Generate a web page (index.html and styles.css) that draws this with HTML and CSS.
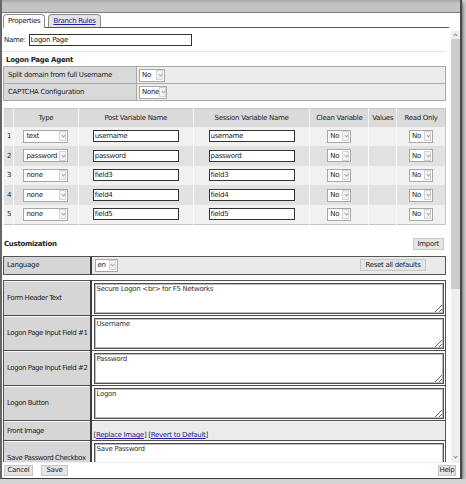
FILE: index.html
```
<!DOCTYPE html>
<html lang="en">
<head>
  <meta charset="UTF-8">
  <title>Logon Page</title>
  <link rel="stylesheet" href="styles.css">
</head>
<body>

<div class="window">
  <div class="titlebar"></div>

  <div class="main">
    <div class="content">
      <div class="tabs">
        <span class="tab active">Properties</span>
        <span class="tab"><a href="#">Branch Rules</a></span>
      </div>

      <div class="name-row">
        <span>Name:</span>
        <input type="text" class="name-input" value="Logon Page">
      </div>
      <div class="rule"></div>

      <div class="section-title">Logon Page Agent</div>
      <table class="agent">
        <tr>
          <td class="label">Split domain from full Username</td>
          <td><span class="sel w26">No<i class="arrow"></i></span></td>
        </tr>
        <tr>
          <td class="label">CAPTCHA Configuration</td>
          <td><span class="sel w28">None<i class="arrow"></i></span></td>
        </tr>
      </table>

      <table class="vars">
        <tr class="head">
          <th class="num"></th>
          <th class="c-type">Type</th>
          <th class="c-post">Post Variable Name</th>
          <th class="c-sess">Session Variable Name</th>
          <th class="c-clean">Clean Variable</th>
          <th class="c-values">Values</th>
          <th class="c-ro">Read Only</th>
        </tr>
        <tr>
          <td class="num">1</td>
          <td><span class="sel w45">text<i class="arrow"></i></span></td>
          <td><input type="text" class="field" value="username"></td>
          <td><input type="text" class="field" value="username"></td>
          <td><span class="sel w24">No<i class="arrow"></i></span></td>
          <td></td>
          <td><span class="sel w24">No<i class="arrow"></i></span></td>
        </tr>
        <tr>
          <td class="num">2</td>
          <td><span class="sel w45">password<i class="arrow"></i></span></td>
          <td><input type="text" class="field" value="password"></td>
          <td><input type="text" class="field" value="password"></td>
          <td><span class="sel w24">No<i class="arrow"></i></span></td>
          <td></td>
          <td><span class="sel w24">No<i class="arrow"></i></span></td>
        </tr>
        <tr>
          <td class="num">3</td>
          <td><span class="sel w45">none<i class="arrow"></i></span></td>
          <td><input type="text" class="field" value="field3"></td>
          <td><input type="text" class="field" value="field3"></td>
          <td><span class="sel w24">No<i class="arrow"></i></span></td>
          <td></td>
          <td><span class="sel w24">No<i class="arrow"></i></span></td>
        </tr>
        <tr>
          <td class="num">4</td>
          <td><span class="sel w45">none<i class="arrow"></i></span></td>
          <td><input type="text" class="field" value="field4"></td>
          <td><input type="text" class="field" value="field4"></td>
          <td><span class="sel w24">No<i class="arrow"></i></span></td>
          <td></td>
          <td><span class="sel w24">No<i class="arrow"></i></span></td>
        </tr>
        <tr>
          <td class="num">5</td>
          <td><span class="sel w45">none<i class="arrow"></i></span></td>
          <td><input type="text" class="field" value="field5"></td>
          <td><input type="text" class="field" value="field5"></td>
          <td><span class="sel w24">No<i class="arrow"></i></span></td>
          <td></td>
          <td><span class="sel w24">No<i class="arrow"></i></span></td>
        </tr>
      </table>

      <div class="custom-head">
        <span class="bold">Customization</span>
        <button class="btn">Import</button>
      </div>

      <table class="lang">
        <tr>
          <td class="label">Language</td>
          <td class="lang-value">
            <span class="sel w23">en<i class="arrow"></i></span>
            <button class="btn reset">Reset all defaults</button>
          </td>
        </tr>
      </table>

      <table class="custom">
        <tr>
          <td class="label">Form Header Text</td>
          <td><textarea>Secure Logon &lt;br&gt; for F5 Networks</textarea></td>
        </tr>
        <tr>
          <td class="label">Logon Page Input Field #1</td>
          <td><textarea>Username</textarea></td>
        </tr>
        <tr>
          <td class="label">Logon Page Input Field #2</td>
          <td><textarea>Password</textarea></td>
        </tr>
        <tr>
          <td class="label">Logon Button</td>
          <td><textarea>Logon</textarea></td>
        </tr>
        <tr class="short">
          <td class="label">Front Image</td>
          <td class="links">[<a href="#">Replace Image</a>] [<a href="#">Revert to Default</a>]</td>
        </tr>
        <tr>
          <td class="label">Save Password Checkbox</td>
          <td><textarea>Save Password</textarea></td>
        </tr>
      </table>
    </div>

    <div class="scrollbar">
      <span class="sb-up"></span>
      <span class="sb-thumb"></span>
      <span class="sb-track"></span>
      <span class="sb-down"></span>
    </div>
  </div>

  <div class="footer">
    <button class="btn cancel">Cancel</button>
    <button class="btn save">Save</button>
    <button class="btn help">Help</button>
  </div>
</div>

</body>
</html>
```

FILE: styles.css
```
* {
  box-sizing: border-box;
}
body {
  margin: 0;
  background: #d4d4d4;
  font-family: Tahoma, "DejaVu Sans", sans-serif;
  font-size: 7px;
  letter-spacing: -0.3px;
  color: #222;
}
a {
  color: #23239c;
}
.bold {
  font-weight: bold;
}
.window {
  width: 462px;
  height: 479px;
  background: #fff;
  border-left: 2px solid #666;
  border-right: 2px solid #474747;
  border-bottom: 1px solid #3a3a3a;
  box-shadow: 1px 2px 4px rgba(0,0,0,0.55);
  display: flex;
  flex-direction: column;
}
.titlebar {
  flex: none;
  height: 13px;
  background: linear-gradient(#a9a9a9, #c4c4c4 4px);
  border-bottom: 1px solid #7c7c7c;
}
.main {
  flex: 1;
  display: flex;
  overflow: hidden;
}
.content {
  flex: 1;
  padding: 0 5px 0 1px;
  overflow: hidden;
}

/* tabs */
.tabs {
  display: flex;
  align-items: flex-end;
  gap: 3px;
  height: 15px;
  margin-right: -3px;
  border-bottom: 1px solid #555;
}
.tab {
  height: 13px;
  padding: 0 4px;
  line-height: 12px;
  border: 1px solid #8c8c8c;
  border-bottom: none;
  border-radius: 4px 4px 0 0;
  background: #e4e4e4;
}
.tab.active {
  height: 14px;
  margin-bottom: -1px;
  background: #fff;
}

.name-row {
  display: flex;
  align-items: center;
  gap: 3px;
  height: 12px;
  margin-top: 6px;
  padding-left: 1px;
}
.name-input {
  width: 163px;
  height: 12px;
  padding: 0 1px;
  border: 1px solid #333;
  font: inherit;
  letter-spacing: inherit;
  color: #222;
}
.rule {
  margin-top: 5px;
  border-top: 1px solid #e4e4e4;
}
.section-title {
  height: 11px;
  margin: 3px 0 0 3px;
  line-height: 11px;
  font-weight: bold;
}

/* fake select boxes */
.sel {
  display: inline-flex;
  align-items: center;
  height: 13px;
  padding-left: 2px;
  border: 1px solid #a8a8a8;
  background: #fff;
  vertical-align: middle;
  text-align: left;
}
.sel .arrow {
  position: relative;
  flex: none;
  width: 7px;
  height: 10px;
  margin-left: auto;
  margin-right: 1px;
  border: 1px solid #d4d4d4;
  background: #f4f4f4;
}
.sel .arrow::after {
  content: "";
  position: absolute;
  left: 1.5px;
  top: 2px;
  width: 2px;
  height: 2px;
  border-right: 1px solid #a4a4a4;
  border-bottom: 1px solid #a4a4a4;
  transform: rotate(45deg);
}
.w23 { width: 23px; }
.w24 { width: 24px; }
.w26 { width: 26px; }
.w28 { width: 28px; }
.w45 { width: 45px; }

table {
  width: 443px;
  border-collapse: collapse;
}
td, th {
  padding: 0;
}

.agent td {
  height: 17px;
  border: 1px solid #a9a9a9;
  background: #ececec;
  padding-left: 2px;
}
.agent td.label {
  width: 133px;
  padding-left: 4px;
  background: #d9d9d9;
}

.vars {
  margin-top: 7px;
  border: 1px solid #c4c4c4;
}
.vars th {
  height: 18px;
  font-weight: normal;
  background: #dadada;
  border-left: 1px solid #f2f2f2;
}
.vars td {
  height: 19.6px;
  text-align: center;
  border-left: 1px solid #fafafa;
  background: #f1f1f1;
}
.vars tr:nth-child(odd) td {
  background: #e1e1e1;
}
.vars .num {
  width: 10px;
  padding-left: 3px;
  text-align: left;
}
.c-type { width: 65px; }
.c-post { width: 115px; }
.c-sess { width: 117px; }
.c-clean { width: 59px; }
.c-values { width: 28px; }
.c-ro { width: 49px; }
.field {
  width: 86px;
  height: 12px;
  padding: 0 1px;
  border: 1px solid #333;
  font: inherit;
  letter-spacing: inherit;
  color: #222;
  vertical-align: middle;
}

.custom-head {
  display: flex;
  align-items: center;
  justify-content: space-between;
  height: 13px;
  margin-top: 13px;
  padding: 0 2px 0 1px;
}
.btn {
  height: 12px;
  padding: 0 4px;
  border: 1px solid #c6c6c6;
  background: #e5e5e5;
  font: inherit;
  letter-spacing: inherit;
  color: #222;
  line-height: 10px;
}

.lang {
  margin-top: 5px;
  border: 1px solid #555;
  table-layout: fixed;
}
.lang td {
  height: 17px;
  background: #eaeaea;
  padding-left: 3px;
}
.lang td.label {
  width: 87px;
  background: #d6d6d6;
  border-right: 2px solid #3c3c3c;
}
.lang-value {
  display: flex;
  align-items: center;
  justify-content: space-between;
  padding-right: 19px;
}
.reset {
  width: 66px;
  padding: 0;
}

.custom {
  margin-top: 5px;
  border: 1px solid #555;
  table-layout: fixed;
}
.custom td {
  height: 34px;
  padding: 2px 2px 1px;
  border-bottom: 1px solid #4c4c4c;
  box-shadow: inset 0 1px 0 #fafafa;
  vertical-align: middle;
}
.custom td.label {
  width: 87px;
  padding-left: 3px;
  background: #d6d6d6;
  border-right: 2px solid #3c3c3c;
  white-space: nowrap;
  letter-spacing: -0.45px;
}
.custom tr.short td {
  height: 20px;
  background: #ebebeb;
}
.custom tr.short td.label {
  background: #d6d6d6;
}
.custom td.links {
  vertical-align: bottom;
  padding-bottom: 1px;
}
textarea {
  display: block;
  width: 350px;
  height: 31px;
  padding: 1px 2px;
  border: 1px solid #505050;
  box-shadow: inset 0 0 0 1px #bdbdbd;
  font: inherit;
  letter-spacing: inherit;
  color: #333;
}

/* scrollbar */
.scrollbar {
  width: 9px;
  margin-top: 18px;
  display: flex;
  flex-direction: column;
  background: #efefef;
}
.sb-up, .sb-down {
  height: 8px;
  position: relative;
}
.sb-up::after, .sb-down::after {
  content: "";
  position: absolute;
  left: 3px;
  width: 2px;
  height: 2px;
  border-left: 1px solid #888;
  border-top: 1px solid #888;
}
.sb-up::after {
  top: 3px;
  transform: rotate(45deg);
}
.sb-down::after {
  top: 1px;
  transform: rotate(225deg);
}
.sb-thumb {
  height: 250px;
  background: #cdcdcd;
}
.sb-track {
  flex: 1;
}

.footer {
  flex: none;
  display: flex;
  align-items: center;
  gap: 8px;
  height: 16px;
  padding: 0 4px 0 2px;
  border-top: 1px solid #f0f0f0;
}
.footer .btn {
  height: 11px;
  padding: 0;
  line-height: 9px;
}
.footer .cancel {
  width: 29px;
}
.footer .save {
  width: 27px;
}
.footer .help {
  width: 18px;
  margin-left: auto;
}
```
